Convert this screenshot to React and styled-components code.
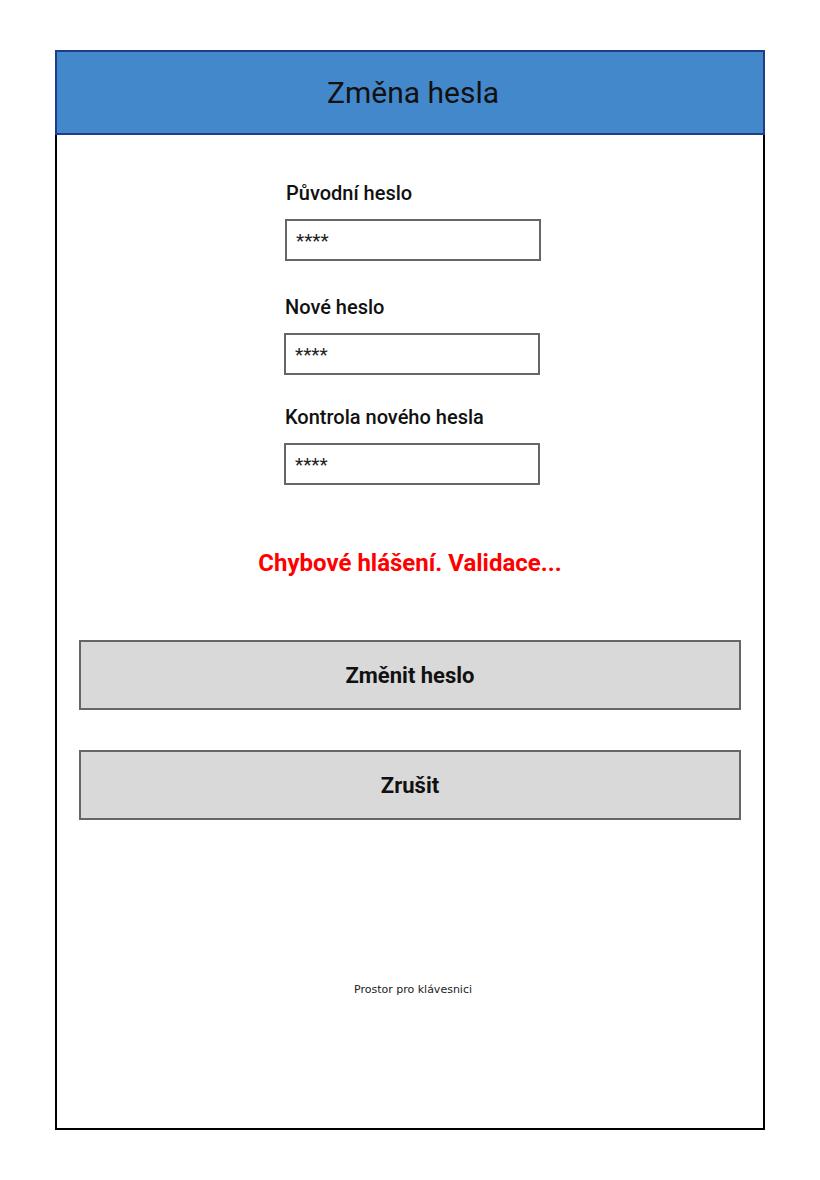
import React from 'react';
import styled, { createGlobalStyle } from 'styled-components';

const GlobalStyle = createGlobalStyle`
  html, body {
    margin: 0;
    padding: 0;
    background: #fff;
    font-family: Roboto, "Liberation Sans", sans-serif;
    color: #111;
  }
`;

const fields = [
  { label: 'Původní heslo', top: 47, shift: 1 },
  { label: 'Nové heslo', top: 35, shift: 0 },
  { label: 'Kontrola nového hesla', top: 31, shift: 0 },
];

function App() {
  return (
    <>
      <GlobalStyle />
      <Page>
        <Frame>
          <Header>
            <Title>Změna hesla</Title>
          </Header>
          <Body>
            <Form>
              {fields.map((f) => (
                <Field key={f.label} $top={f.top} $shift={f.shift}>
                  <Label>{f.label}</Label>
                  <Input>****</Input>
                </Field>
              ))}
            </Form>
            <Error>Chybové hlášení. Validace...</Error>
            <Actions>
              <Button>Změnit heslo</Button>
              <Button>Zrušit</Button>
            </Actions>
            <Keyboard>Prostor pro klávesnici</Keyboard>
          </Body>
        </Frame>
      </Page>
    </>
  );
}

export default App;

const Page = styled.div`
  padding: 50px 0 50px 55px;
`;

const Frame = styled.div`
  width: 710px;
  display: flex;
  flex-direction: column;
`;

const Header = styled.div`
  height: 85px;
  box-sizing: border-box;
  background: #4488cc;
  border: 2px solid #1f3c8c;
  display: flex;
  align-items: center;
  justify-content: center;
`;

const Title = styled.h1`
  margin: 0 0 0 6px;
  font-size: 30px;
  font-weight: 400;
  color: #111;
  line-height: 1;
`;

const Body = styled.div`
  height: 995px;
  box-sizing: border-box;
  border: 2px solid #000;
  border-top: none;
  display: flex;
  flex-direction: column;
`;

const Form = styled.div`
  display: flex;
  flex-direction: column;
  padding-left: 227px;
`;

const Field = styled.div`
  margin-top: ${(p) => p.$top}px;
  margin-left: ${(p) => p.$shift}px;
  display: flex;
  flex-direction: column;
`;

const Label = styled.div`
  font-size: 20px;
  font-weight: 500;
  line-height: 22px;
  margin-left: 1px;
  margin-bottom: 15px;
`;

const Input = styled.div`
  width: 256px;
  height: 42px;
  box-sizing: border-box;
  border: 2px solid #666;
  padding-left: 9px;
  display: flex;
  align-items: center;
  font-size: 19px;
  color: #222;
`;

const Error = styled.div`
  margin-top: 65px;
  text-align: center;
  color: #ff0000;
  font-size: 24px;
  font-weight: 700;
  line-height: 26px;
`;

const Actions = styled.div`
  margin-top: 64px;
  padding: 0 22px;
  display: flex;
  flex-direction: column;
  gap: 40px;
`;

const Button = styled.div`
  height: 70px;
  box-sizing: border-box;
  background: #d9d9d9;
  border: 2px solid #666;
  display: flex;
  align-items: center;
  justify-content: center;
  font-size: 22px;
  font-weight: 700;
  color: #111;
`;

const Keyboard = styled.div`
  margin-top: 163px;
  text-align: center;
  font-family: "DejaVu Sans", sans-serif;
  font-size: 11px;
  line-height: 14px;
  color: #222;
  padding-left: 6px;
`;
